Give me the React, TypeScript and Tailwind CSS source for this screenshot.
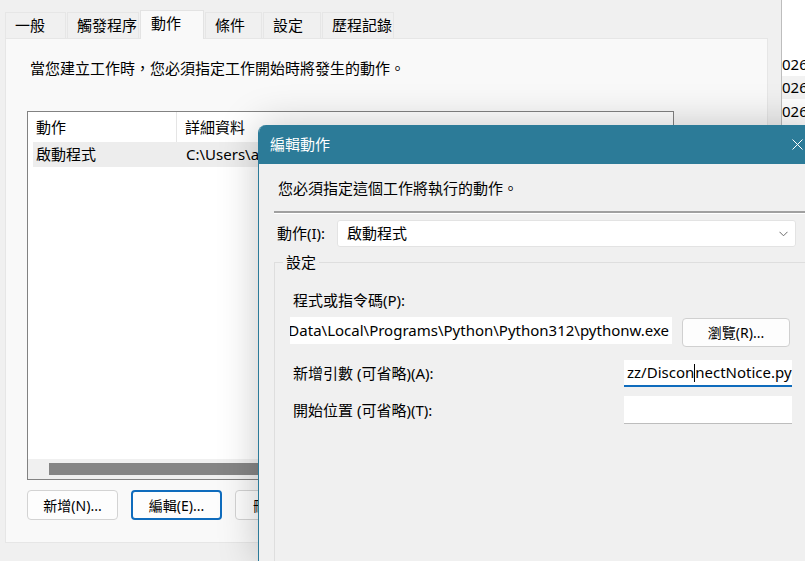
import React from "react";

const FONT = '"Noto Sans", "Noto Sans CJK TC", sans-serif';

function Tab({ label, w, active }: { label: string; w: string; active?: boolean }) {
  if (active) {
    return (
      <div
        className={`${w} h-[29px] -mb-px relative z-10 bg-[#f9f9f9] border border-[#e3e3e3] border-b-0 flex items-start pl-[10px] pt-[1px] text-[15px] text-black`}
      >
        {label}
      </div>
    );
  }
  return (
    <div
      className={`${w} h-[26px] bg-[#f0f0f0] border border-[#e6e6e6] border-b-0 flex items-center pl-[9px] text-[15px] text-black`}
    >
      {label}
    </div>
  );
}

function WinButton({ label, focused, w, extra }: { label: string; focused?: boolean; w: string; extra?: string }) {
  return (
    <div
      className={`${w} h-[30px] rounded-[4px] bg-[#fdfdfd] flex items-center text-[14px] text-black ${
        extra ?? "justify-center"
      } ${focused ? "border-2 border-[#0f6cbd]" : "border border-[#d3d3d3]"}`}
    >
      {label}
    </div>
  );
}

export default function App() {
  return (
    <div
      className="relative w-[805px] h-[561px] overflow-hidden bg-[#f0f0f0] flex"
      style={{ fontFamily: FONT }}
    >
      {/* Main property window */}
      <div className="w-[781px] shrink-0 flex flex-col pl-[5px] pt-[9px]">
        {/* Tabs */}
        <div className="flex items-end gap-[1px] h-[29px] shrink-0">
          <Tab label="一般" w="w-[61px]" />
          <Tab label="觸發程序" w="w-[72px]" />
          <Tab label="動作" w="w-[64px]" active />
          <Tab label="條件" w="w-[57px]" />
          <Tab label="設定" w="w-[58px]" />
          <Tab label="歷程記錄" w="w-[72px]" />
        </div>
        {/* Tab panel */}
        <div className="w-[763px] h-[505px] shrink-0 bg-[#f9f9f9] border border-[#e6e6e6] flex flex-col pl-[21px]">
          <div className="pt-[19px] text-[15px] text-black leading-[20px] pl-[3px] shrink-0">
            當您建立工作時，您必須指定工作開始時將發生的動作。
          </div>
          {/* List */}
          <div className="mt-[33px] w-[647px] h-[369px] shrink-0 border border-[#828282] bg-white flex flex-col">
            <div className="h-[30px] shrink-0 flex text-[15px] text-black">
              <div className="w-[149px] border-r border-[#e5e5e5] flex items-center pl-[8px]">動作</div>
              <div className="flex items-center pl-[8px]">詳細資料</div>
            </div>
            <div className="h-[25px] shrink-0 ml-[5px] bg-[#ededed] flex items-center text-[15px] text-black">
              <div className="w-[144px] pl-[3px]">啟動程式</div>
              <div className="pl-[9px] whitespace-nowrap">C:\Users\al</div>
            </div>
            <div className="flex-1" />
            <div className="h-[20px] shrink-0 bg-[#f0f0f0] flex items-center pl-[21px]">
              <div className="h-[12px] w-[560px] bg-[#858585]" />
            </div>
          </div>
          {/* Buttons */}
          <div className="mt-[10px] flex gap-[13px] shrink-0">
            <WinButton label="新增(N)..." w="w-[91px]" />
            <WinButton label="編輯(E)..." w="w-[91px]" focused />
            <WinButton label="刪除(D)" w="w-[91px]" extra="justify-start pl-[17px]" />
          </div>
        </div>
      </div>

      {/* Right window strip */}
      <div className="flex-1 bg-white border-l border-[#bdbdbd] flex flex-col pt-[52px] text-[15px] text-black overflow-hidden">
        <div className="h-[24px] flex items-center whitespace-nowrap">026</div>
        <div className="h-[23px] flex items-center bg-[#f2f2f2] whitespace-nowrap">026</div>
        <div className="h-[24px] flex items-center whitespace-nowrap">026</div>
      </div>

      {/* Edit Action dialog */}
      <div className="absolute left-[258px] top-[125px] w-[570px] h-[436px] rounded-tl-[8px] overflow-hidden bg-[#f0f0f0] border-l border-[#2b7a99] shadow-[0_0_40px_rgba(0,0,0,0.22)] flex flex-col">
        <div className="h-[39px] shrink-0 bg-[#2c7b98] flex items-center pl-[11px] text-[15px] text-white relative">
          編輯動作
          <svg
            className="absolute left-[533px] top-[14px]"
            width="11"
            height="11"
            viewBox="0 0 11 11"
          >
            <path d="M0.5 0.5 L10.5 10.5 M10.5 0.5 L0.5 10.5" stroke="white" strokeWidth="1" />
          </svg>
        </div>
        <div className="flex-1 min-h-0 flex flex-col pl-[15px]">
          <div className="pl-[4px] pt-[14px] h-[47px] shrink-0 text-[15px] text-black leading-[20px]">
            您必須指定這個工作將執行的動作。
          </div>
          <div className="h-[3px] shrink-0 border-t-2 border-[#a0a0a0] border-b border-b-white" />
          <div className="mt-[6px] flex items-center shrink-0">
            <div className="w-[63px] pl-[3px] text-[15px] text-black">動作(I):</div>
            <div className="w-[459px] h-[27px] bg-white border border-[#e3e3e3] rounded-[3px] flex items-center pl-[9px] text-[15px] text-black relative">
              啟動程式
              <svg className="absolute right-[7px] top-[10px]" width="9" height="6" viewBox="0 0 9 6">
                <path d="M0.5 0.8 L4.5 4.8 L8.5 0.8" stroke="#6b6b6b" strokeWidth="1" fill="none" />
              </svg>
            </div>
          </div>
          {/* Group box */}
          <div className="mt-[15px] flex-1 relative border-l border-t border-[#dedede] flex flex-col pl-[16px]">
            <div className="absolute left-[8px] -top-[11px] bg-[#f0f0f0] px-[3px] text-[15px] text-black leading-[20px]">
              設定
            </div>
            <div className="pl-[2px] pt-[27px] h-[54px] shrink-0 text-[15px] text-black leading-[20px]">程式或指令碼(P):</div>
            <div className="flex items-start -ml-[1px] shrink-0">
              <div className="w-[382px] h-[27px] bg-white flex items-center justify-end overflow-hidden pr-[3px] text-[15px] text-black whitespace-nowrap">
                C:\Users\alex\AppData\Local\Programs\Python\Python312\pythonw.exe
              </div>
              <div className="ml-[10px] mt-[1px] w-[108px] h-[29px] rounded-[4px] bg-[#fdfdfd] border border-[#d0d0d0] flex items-center justify-center text-[14px] text-black">
                瀏覽(R)...
              </div>
            </div>
            <div className="mt-[13px] flex items-center h-[27px] shrink-0">
              <div className="w-[333px] pl-[2px] text-[15px] text-black">新增引數 (可省略)(A):</div>
              <div className="w-[168px] h-[27px] bg-white border-b-2 border-[#0f6cbd] flex items-center pl-[3px] text-[15px] text-black whitespace-nowrap overflow-hidden">
                zz/Discon
                <span className="inline-block w-px h-[18px] bg-black" />
                nectNotice.py
              </div>
            </div>
            <div className="mt-[9px] flex items-center h-[28px] shrink-0">
              <div className="w-[333px] pl-[2px] text-[15px] text-black">開始位置 (可省略)(T):</div>
              <div className="w-[168px] h-[28px] bg-white border-b border-[#bdbdbd]" />
            </div>
          </div>
        </div>
      </div>
    </div>
  );
}
